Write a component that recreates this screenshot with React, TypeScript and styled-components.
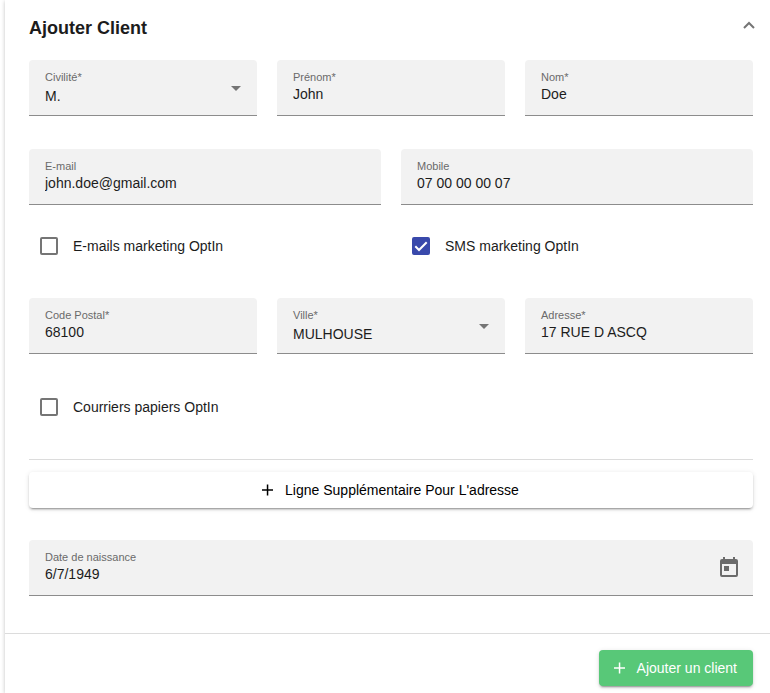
import React from "react";
import styled, { createGlobalStyle } from "styled-components";

const GlobalStyle = createGlobalStyle`
  *, *::before, *::after {
    box-sizing: border-box;
  }
  body {
    margin: 0;
    background: #fff;
    color: #1c1c1c;
    font-family: "Liberation Sans", Arial, Helvetica, sans-serif;
    font-size: 14px;
  }
  button, input, select {
    font: inherit;
    color: inherit;
  }
`;

const Panel = styled.main`
  min-height: 100vh;
  margin-left: 5px;
  box-shadow: 0 1px 4px rgba(0, 0, 0, 0.24);
  background: #fff;
`;

const Header = styled.header`
  display: flex;
  align-items: center;
  justify-content: space-between;
  height: 56px;
  padding: 0 15px 0 24px;
`;

const Title = styled.h1`
  margin: 0;
  font-size: 18px;
  line-height: 24px;
  font-weight: 700;
`;

const CollapseButton = styled.button`
  display: flex;
  padding: 0;
  border: 0;
  background: none;
  color: #757575;
  cursor: pointer;
  margin-bottom: 6px;
`;

const Form = styled.form`
  padding-top: 4px;
`;

const Fields = styled.div`
  padding: 0 17px 37px 24px;
`;

const Row = styled.div<{ $columns: number; $gap: number }>`
  display: grid;
  grid-template-columns: repeat(${(p) => p.$columns}, minmax(0, 1fr));
  column-gap: 20px;
  margin-bottom: ${(p) => p.$gap}px;
`;

const FieldBox = styled.div`
  display: flex;
  align-items: center;
  height: 56px;
  padding: 0 16px;
  border-bottom: 1px solid #8c8c8c;
  border-radius: 4px 4px 0 0;
  background: #f2f2f2;
`;

const FieldBody = styled.div`
  display: flex;
  flex: 1;
  flex-direction: column;
  align-self: flex-start;
  min-width: 0;
  padding-top: 10px;
`;

const FieldLabel = styled.label`
  color: #6a6a6a;
  font-size: 11px;
  line-height: 14px;
`;

const TextInput = styled.input`
  width: 100%;
  height: 20px;
  padding: 0;
  border: 0;
  outline: 0;
  background: none;
  font-size: 14px;
  line-height: 20px;
`;

const SelectInput = styled.select`
  width: 100%;
  height: 24px;
  padding: 0;
  border: 0;
  outline: 0;
  appearance: none;
  background: none;
  font-size: 14px;
  line-height: 24px;
`;

const Arrow = styled.svg`
  flex: none;
  width: 10px;
  height: 5px;
  margin-top: 2px;
  fill: #757575;
`;

const IconButton = styled.button`
  display: flex;
  padding: 0;
  margin: 0 -1px 2px 0;
  border: 0;
  background: none;
  color: #6b6b6b;
  cursor: pointer;
`;

const CheckLabel = styled.label`
  display: flex;
  align-items: center;
  gap: 15px;
  height: 20px;
  padding-left: 11px;
  font-size: 14px;
`;

const CheckInput = styled.input`
  flex: none;
  width: 18px;
  height: 18px;
  margin: 0;
  appearance: none;
  border: 2px solid #757575;
  border-radius: 2px;
  background: #fff;

  &:checked {
    border-color: #3949ab;
    background: #3949ab;
  }
`;

const CheckBox = styled.span`
  position: relative;
  display: flex;
`;

const CheckMark = styled.svg`
  position: absolute;
  inset: 0;
  fill: none;
  stroke: #fff;
  stroke-width: 2;
  pointer-events: none;

  input:not(:checked) + & {
    display: none;
  }
`;

const Divider = styled.hr`
  margin: 0 0 12px;
  border: 0;
  border-top: 1px solid #dcdcdc;
`;

const Button = styled.button<{ $primary?: boolean }>`
  display: flex;
  align-items: center;
  justify-content: center;
  gap: 9px;
  width: ${(p) => (p.$primary ? "auto" : "100%")};
  height: 36px;
  padding: 0 16px 0 11px;
  border: 0;
  border-radius: 4px;
  background: ${(p) => (p.$primary ? "#58c878" : "#fff")};
  color: ${(p) => (p.$primary ? "#fff" : "#000")};
  box-shadow: 0 3px 1px -2px rgba(0, 0, 0, 0.2),
    0 2px 2px 0 rgba(0, 0, 0, 0.14), 0 1px 5px 0 rgba(0, 0, 0, 0.12);
  font-size: 14px;
  cursor: pointer;
`;

const BirthField = styled.div`
  margin-top: 32px;
`;

const Footer = styled.footer`
  display: flex;
  justify-content: flex-end;
  padding: 16px 17px 7px;
  border-top: 1px solid #dcdcdc;
`;

const PlusIcon = () => (
  <svg width="18" height="18" viewBox="0 0 18 18" fill="currentColor" aria-hidden="true">
    <path d="M8.8 3.5h1.5v4.7H15v1.5h-4.7v4.8H8.8V9.7H4V8.2h4.8z" />
  </svg>
);

type FieldProps = {
  id: string;
  label: string;
  value: string;
  children?: React.ReactNode;
};

const TextField = ({ id, label, value, children }: FieldProps) => (
  <FieldBox>
    <FieldBody>
      <FieldLabel htmlFor={id}>{label}</FieldLabel>
      <TextInput id={id} type="text" defaultValue={value} />
    </FieldBody>
    {children}
  </FieldBox>
);

const SelectField = ({ id, label, value }: FieldProps) => (
  <FieldBox>
    <FieldBody>
      <FieldLabel htmlFor={id}>{label}</FieldLabel>
      <SelectInput id={id} defaultValue={value}>
        <option>{value}</option>
      </SelectInput>
    </FieldBody>
    <Arrow viewBox="0 0 10 5" aria-hidden="true">
      <path d="M0 0h10L5 5z" />
    </Arrow>
  </FieldBox>
);

const Check = ({ label, checked = false }: { label: string; checked?: boolean }) => (
  <CheckLabel>
    <CheckBox>
      <CheckInput type="checkbox" defaultChecked={checked} />
      <CheckMark width="18" height="18" viewBox="0 0 18 18" aria-hidden="true">
        <path d="M3.3 9.3l3.7 3.7L14.7 5.2" />
      </CheckMark>
    </CheckBox>
    {label}
  </CheckLabel>
);

export default function App() {
  return (
    <>
      <GlobalStyle />
      <Panel>
        <Header>
          <Title>Ajouter Client</Title>
          <CollapseButton type="button" aria-label="Réduire">
            <svg width="12" height="8" viewBox="0 0 12 8" fill="none" stroke="currentColor" strokeWidth="2">
              <path d="M1 7l5-5 5 5" />
            </svg>
          </CollapseButton>
        </Header>
        <Form onSubmit={(e) => e.preventDefault()}>
          <Fields>
            <Row $columns={3} $gap={33}>
              <SelectField id="civilite" label="Civilité*" value="M." />
              <TextField id="prenom" label="Prénom*" value="John" />
              <TextField id="nom" label="Nom*" value="Doe" />
            </Row>
            <Row $columns={2} $gap={31}>
              <TextField id="email" label="E-mail" value="john.doe@gmail.com" />
              <TextField id="mobile" label="Mobile" value="07 00 00 00 07" />
            </Row>
            <Row $columns={2} $gap={42}>
              <Check label="E-mails marketing OptIn" />
              <Check label="SMS marketing OptIn" checked />
            </Row>
            <Row $columns={3} $gap={43}>
              <TextField id="postal" label="Code Postal*" value="68100" />
              <SelectField id="ville" label="Ville*" value="MULHOUSE" />
              <TextField id="adresse" label="Adresse*" value="17 RUE D ASCQ" />
            </Row>
            <Row $columns={1} $gap={42}>
              <Check label="Courriers papiers OptIn" />
            </Row>
            <Divider />
            <Button type="button">
              <PlusIcon />
              Ligne Supplémentaire Pour L'adresse
            </Button>
            <BirthField>
              <TextField id="naissance" label="Date de naissance" value="6/7/1949">
                <IconButton type="button" aria-label="Ouvrir le calendrier">
                  <svg width="18" height="20" viewBox="0 0 18 20" fill="currentColor" aria-hidden="true">
                    <path
                      fillRule="evenodd"
                      d="M3 0h2v2h8V0h2v2h1a2 2 0 0 1 2 2v14a2 2 0 0 1-2 2H2a2 2 0 0 1-2-2V4a2 2 0 0 1 2-2h1zM2 7v11h14V7zM4 9h5v5H4z"
                    />
                  </svg>
                </IconButton>
              </TextField>
            </BirthField>
          </Fields>
          <Footer>
            <Button type="submit" $primary>
              <PlusIcon />
              Ajouter un client
            </Button>
          </Footer>
        </Form>
      </Panel>
    </>
  );
}
